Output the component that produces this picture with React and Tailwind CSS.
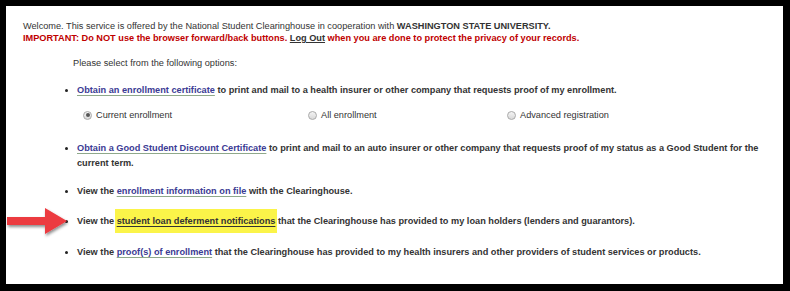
import React from 'react';

const Bala = ({ children, className = '', lh = 12 }) => (
  <div className={`flex items-start ${className}`}>
    <span className={`w-[12px] shrink-0 flex items-center ${lh === 15 ? 'h-[15px]' : 'h-[12px]'}`}>
      <span className="w-[3px] h-[3px] bg-[#222] rounded-full"></span>
    </span>
    <div className={`flex-1 ${lh === 15 ? 'leading-[15px]' : 'leading-[12px]'}`}>{children}</div>
  </div>
);

const Enlace = ({ children }) => (
  <span className="text-[#3b3b94] underline decoration-[#8fa88a] underline-offset-[2px]">{children}</span>
);

const Radio = ({ label, checked }) => (
  <div className="flex items-center gap-[4px] h-[12px]">
    <span className="w-[9px] h-[9px] rounded-full border border-[#a9a9a9] bg-gradient-to-b from-[#f4f4f4] to-[#d9d9d9] flex items-center justify-center">
      {checked && <span className="w-[4px] h-[4px] rounded-full bg-[#555]"></span>}
    </span>
    <span className="text-[#333] font-normal">{label}</span>
  </div>
);

const Flecha = () => (
  <svg className="absolute left-[-3px] top-[199px]" width="66" height="36" viewBox="0 0 66 36">
    <defs>
      <filter id="sombra" x="-20%" y="-30%" width="140%" height="160%">
        <feDropShadow dx="1" dy="2" stdDeviation="1.5" floodColor="#000" floodOpacity="0.45" />
      </filter>
    </defs>
    <path d="M4 12 L42 12 L42 3 L64 16 L42 29 L42 20 L4 20 Z" fill="#ec3a3f" filter="url(#sombra)" />
  </svg>
);

export default function App() {
  return (
    <div className="w-[790px] h-[291px] bg-black pt-[6px] pl-[6px]" style={{ fontFamily: '"Liberation Sans", Arial, sans-serif' }}>
      <div className="relative w-[777px] h-[278px] bg-white pt-[14px] pl-[17px] pr-[16px] text-[9.2px] leading-[12px] text-[#333]">
        <p>
          Welcome. This service is offered by the National Student Clearinghouse in cooperation with{' '}
          <b className="font-bold">WASHINGTON STATE UNIVERSITY.</b>
        </p>
        <p className="font-bold text-[#c00000]">
          IMPORTANT: Do NOT use the browser forward/back buttons.{' '}
          <span className="text-[#333] underline">Log Out</span> when you are done to protect the privacy of your records.
        </p>

        <div className="pl-[50px] mt-[13px]">Please select from the following options:</div>

        <div className="pl-[42px] mt-[15px] font-bold">
          <Bala>
            <Enlace>Obtain an enrollment certificate</Enlace> to print and mail to a health insurer or other company that requests proof of my enrollment.
          </Bala>
          <div className="flex mt-[13px] pl-[18px]">
            <div className="w-[225px]"><Radio label="Current enrollment" checked /></div>
            <div className="w-[199px]"><Radio label="All enrollment" /></div>
            <Radio label="Advanced registration" />
          </div>

          <Bala className="mt-[20px]" lh={15}>
            <Enlace>Obtain a Good Student Discount Certificate</Enlace> to print and mail to an auto insurer or other company that requests proof of my status as a Good Student for the current term.
          </Bala>

          <Bala className="mt-[14px]">
            View the <Enlace>enrollment information on file</Enlace> with the Clearinghouse.
          </Bala>

          <Bala className="mt-[18px]">
            View the{' '}
            <span className="bg-[#fbf449] py-[7px] px-[2px] -mx-[2px] underline underline-offset-[2px] text-[#333]">student loan deferment notifications</span>{' '}
            that the Clearinghouse has provided to my loan holders (lenders and guarantors).
          </Bala>

          <Bala className="mt-[19px]">
            View the <Enlace>proof(s) of enrollment</Enlace> that the Clearinghouse has provided to my health insurers and other providers of student services or products.
          </Bala>
        </div>

        <Flecha />
      </div>
    </div>
  );
}
